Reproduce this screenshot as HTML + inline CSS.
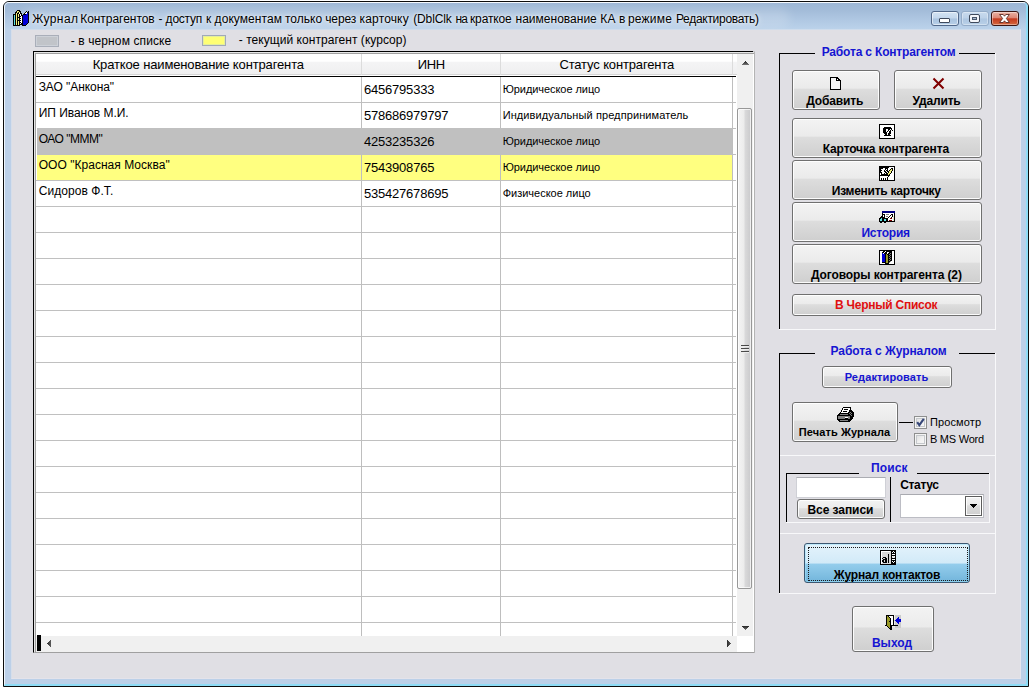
<!DOCTYPE html>
<html lang="ru">
<head>
<meta charset="utf-8">
<title>Журнал Контрагентов</title>
<style>
*{box-sizing:border-box;margin:0;padding:0}
html,body{width:1030px;height:689px;overflow:hidden;background:#fff}
body{font-family:"Liberation Sans",sans-serif;font-size:12px;color:#000;position:relative}
div,svg{position:absolute}
.t{white-space:pre}
/* window frame */
#win{left:3px;top:1px;width:1026px;height:686px;border:1px solid #0c0c0c;border-radius:6px 6px 0 0;overflow:hidden;background:#bcd0e8}
#titlebg{left:0;top:0;right:0;height:28px;background:linear-gradient(180deg,#9cb6d5 0,#a3bcd9 30%,#b0c8e3 65%,#bcd3eb 100%)}
#titleglow{left:16px;top:6px;width:770px;height:20px;border-radius:10px;background:rgba(255,255,255,.16);filter:blur(5px)}
#winhl{left:0;top:0;right:0;bottom:0;border-left:1px solid #eef5fc;border-top:1px solid #f4f8fd;border-right:2px solid #8edcf6;border-bottom:2px solid #8edcf6;border-radius:5px 5px 0 0}
#client{left:11px;top:29px;width:1010px;height:650px;background:#e0dfe4;border-left:1px solid #d6deea;border-top:1px solid #cfdcec;border-right:1px solid #e4e5ee;border-bottom:1px solid #e4e3ea}
/* table */
#tb{left:33px;top:51px;width:722px;height:602px;background:#fff;border-left:1px solid #000;border-top:1px solid #000;border-right:1px solid #b4b4b4;border-bottom:1px solid #b4b4b4}
#tb2{left:34px;top:52px;width:720px;height:600px;border-left:1px solid #e6e6e6;border-top:1px solid #e6e6e6}
#tb3{left:35px;top:53px;width:719px;height:600px;border-left:1px solid #a0a0a0;border-top:1px solid #a0a0a0;border-bottom:1px solid #a0a0a0}
#hdr{left:36px;top:54px;width:701px;height:21px;background:linear-gradient(180deg,#fff 0,#fff 36%,#f4f4f5 42%,#efeff0 100%);border-bottom:1px solid #d5d5d5}
#hline{left:36px;top:76px;width:700px;height:1px;background:#000}
.hl{left:36px;width:700px;height:1px;background:#c0c0c0}
.vl{top:77px;width:1px;height:559px;background:#bebebe}
.hv{top:54px;width:1px;height:21px;background:#dcdcdc}
/* scrollbars */
#vsb{left:737px;top:54px;width:16px;height:582px;background:#f0f0f0}
#hsb{left:36px;top:636px;width:701px;height:16px;background:#f0f0f0}
#vthumb{left:737px;top:108px;width:15px;height:481px;border:1px solid #989898;border-radius:2px;background:linear-gradient(90deg,#f4f4f4 0,#ececec 45%,#d9d9da 55%,#c9c9cb 100%);box-shadow:inset 0 0 0 1px rgba(255,255,255,.7)}
/* buttons */
.btn{border:1px solid #707070;border-radius:3px;background:linear-gradient(180deg,#f3f3f3 0,#ebebeb 45%,#dddddd 48%,#cfcfcf 100%);box-shadow:inset 0 0 0 1px rgba(255,255,255,.9)}
.btnhot{border:1px solid #3c5771;border-radius:3px;background:linear-gradient(180deg,#e4f3fb 0,#d2eaf8 50%,#94cdec 53%,#72b5db 100%);box-shadow:inset 0 0 0 1px rgba(160,225,250,.55)}
.cb{width:13px;height:13px;border:1px solid #8e8f8f;background:linear-gradient(135deg,#d9dadb 0,#f1f1f1 55%,#fbfbfb 100%);box-shadow:inset 0 0 0 1px #f4f4f4,inset 0 0 0 2px #c5c8cc}
/* group lines */
.k{background:#000}
.w{background:#f8f8fa}
</style>
</head>
<body>
<div id="win"><div id="titlebg"></div><div id="titleglow"></div><div id="winhl"></div></div>
<div id="client"></div>

<!-- legend swatches -->
<div style="left:35px;top:35px;width:24px;height:12px;background:#c1c4c9;border:1px solid #a9aeb9;box-shadow:inset 0 0 0 1px #cdd1d8"></div>
<div style="left:202px;top:35px;width:24px;height:11px;background:#ffff74;border:1px solid #a1a9b8;box-shadow:inset 0 0 0 1px #e4ee9c"></div>

<!-- table -->
<div id="tb"></div><div id="tb2"></div><div id="tb3"></div>
<div id="hdr"></div><div id="hline"></div>
<div class="hv" style="left:361px"></div><div class="hv" style="left:500px"></div><div class="hv" style="left:732px"></div><div style="left:753px;top:51px;width:2px;height:1px;background:#c4c4c8"></div>
<div style="left:37px;top:128px;width:695px;height:27px;background:#c0c0c0"></div>
<div style="left:37px;top:155px;width:695px;height:25px;background:#ffff80"></div>
<div class="hl" style="top:102px"></div>
<div class="hl" style="top:128px;left:732px;width:4px"></div>
<div class="hl" style="top:154px;left:732px;width:4px"></div>
<div class="hl" style="top:180px"></div>
<div class="hl" style="top:206px"></div>
<div class="hl" style="top:232px"></div>
<div class="hl" style="top:258px"></div>
<div class="hl" style="top:284px"></div>
<div class="hl" style="top:310px"></div>
<div class="hl" style="top:336px"></div>
<div class="hl" style="top:362px"></div>
<div class="hl" style="top:388px"></div>
<div class="hl" style="top:414px"></div>
<div class="hl" style="top:440px"></div>
<div class="hl" style="top:466px"></div>
<div class="hl" style="top:492px"></div>
<div class="hl" style="top:518px"></div>
<div class="hl" style="top:544px"></div>
<div class="hl" style="top:570px"></div>
<div class="hl" style="top:596px"></div>
<div class="hl" style="top:622px"></div>
<div class="vl" style="left:361px"></div>
<div class="vl" style="left:500px"></div>
<div class="vl" style="left:732px"></div>
<div style="left:361px;top:128px;width:1px;height:27px;background:#c0c0c0"></div>
<div style="left:500px;top:128px;width:1px;height:27px;background:#c0c0c0"></div>
<div id="vsb"></div><div id="hsb"></div><div id="vthumb"></div>
<!-- scrollbar arrows / grip -->
<svg style="left:742px;top:61px" width="7" height="4" viewBox="0 0 7 4" shape-rendering="crispEdges"><rect x="3" y="0" width="1" height="1" fill="#2f2f2f"/><rect x="2" y="1" width="3" height="1" fill="#3f3f3f"/><rect x="1" y="2" width="5" height="1" fill="#565656"/><rect x="0" y="3" width="7" height="1" fill="#6e6e6e"/></svg>
<svg style="left:742px;top:626px" width="7" height="4" viewBox="0 0 7 4" shape-rendering="crispEdges"><rect x="0" y="0" width="7" height="1" fill="#2f2f2f"/><rect x="1" y="1" width="5" height="1" fill="#3f3f3f"/><rect x="2" y="2" width="3" height="1" fill="#565656"/><rect x="3" y="3" width="1" height="1" fill="#6e6e6e"/></svg>
<svg style="left:47px;top:640px" width="4" height="7" viewBox="0 0 4 7" shape-rendering="crispEdges"><rect x="3" y="0" width="1" height="7" fill="#555"/><rect x="2" y="1" width="1" height="5" fill="#4a4a4a"/><rect x="1" y="2" width="1" height="3" fill="#3f3f3f"/><rect x="0" y="3" width="1" height="1" fill="#333"/></svg>
<svg style="left:727px;top:640px" width="4" height="7" viewBox="0 0 4 7" shape-rendering="crispEdges"><rect x="0" y="0" width="1" height="7" fill="#333"/><rect x="1" y="1" width="1" height="5" fill="#3f3f3f"/><rect x="2" y="2" width="1" height="3" fill="#4a4a4a"/><rect x="3" y="3" width="1" height="1" fill="#555"/></svg>
<div style="left:741px;top:345px;width:8px;height:1px;background:#4a4a4a;box-shadow:0 1px 0 #ededed,0 3px 0 #4a4a4a,0 4px 0 #ededed,0 6px 0 #4a4a4a,0 7px 0 #ededed"></div>
<div style="left:37px;top:635px;width:4px;height:16px;background:#000"></div>
<div style="left:737px;top:636px;width:17px;height:16px;background:#fff"></div>
<!-- caption buttons -->
<div style="left:931px;top:11px;width:28px;height:15px;border:1px solid #51688a;border-radius:3px;background:linear-gradient(180deg,#d3e3f3 0,#c3d7ec 48%,#a9c3df 52%,#b7cfe8 100%);box-shadow:inset 0 0 0 1px rgba(255,255,255,.55)"></div>
<div style="left:939px;top:18px;width:11px;height:5px;border:1px solid #3f4a5c;border-radius:1px;background:#fff"></div>
<div style="left:961px;top:11px;width:28px;height:15px;border:1px solid #93abc8;border-radius:3px;background:linear-gradient(180deg,#c8daee 0,#bcd1e8 48%,#adc6e1 52%,#b9d0e8 100%);box-shadow:inset 0 0 0 1px rgba(255,255,255,.35)"></div>
<div style="left:969px;top:14px;width:11px;height:9px;border:1px solid #3f4a5c;border-radius:2px;background:#f4f6fa"></div>
<div style="left:972px;top:17px;width:5px;height:3px;border:1px solid #4c586b;background:#a9bbd2"></div>
<div style="left:991px;top:11px;width:28px;height:15px;border:1px solid #3b1512;border-radius:3px;background:linear-gradient(180deg,#eab3a5 0,#dd8573 46%,#c53a1e 52%,#d4683f 100%);box-shadow:inset 0 0 0 1px rgba(255,255,255,.4)"></div>
<svg style="left:998px;top:13px" width="13" height="11" viewBox="0 0 13 11"><path d="M1.6 1.5 H5.2 L6.5 3.2 L7.8 1.5 H11.4 L8.4 5.5 L11.4 9.5 H7.8 L6.5 7.8 L5.2 9.5 H1.6 L4.6 5.5 Z" fill="#fff" stroke="#5a2a24" stroke-width="0.9" stroke-linejoin="round"/></svg>


<!-- group 1 -->
<div class="k" style="left:779px;top:53px;width:1px;height:276px"></div>
<div class="k" style="left:779px;top:53px;width:36px;height:1px"></div>
<div class="k" style="left:959px;top:53px;width:36px;height:1px"></div>
<div class="w" style="left:995px;top:53px;width:1px;height:277px"></div>
<div class="w" style="left:779px;top:329px;width:217px;height:1px"></div>
<div class="btn" style="left:792px;top:70px;width:88px;height:40px"></div>
<div class="btn" style="left:894px;top:70px;width:88px;height:40px"></div>
<div class="btn" style="left:792px;top:118px;width:190px;height:40px"></div>
<div class="btn" style="left:792px;top:160px;width:190px;height:40px"></div>
<div class="btn" style="left:792px;top:202px;width:190px;height:40px"></div>
<div class="btn" style="left:792px;top:244px;width:190px;height:40px"></div>
<div class="btn" style="left:792px;top:294px;width:190px;height:22px"></div>
<!-- group 2 -->
<div class="k" style="left:779px;top:353px;width:1px;height:240px"></div>
<div class="k" style="left:779px;top:353px;width:36px;height:1px"></div>
<div class="k" style="left:959px;top:353px;width:36px;height:1px"></div>
<div class="w" style="left:995px;top:353px;width:1px;height:241px"></div>
<div class="w" style="left:779px;top:593px;width:217px;height:1px"></div>
<div class="btn" style="left:822px;top:366px;width:130px;height:22px"></div>
<div class="btn" style="left:792px;top:402px;width:106px;height:40px"></div>
<div class="k" style="left:899px;top:422px;width:14px;height:1px"></div>
<!-- checkboxes -->
<div class="cb" style="left:914px;top:416px"></div>
<svg style="left:914px;top:416px" width="13" height="13" viewBox="0 0 13 13"><path d="M3.2 6.2 L5.3 9.2 L9.8 2.8" fill="none" stroke="#374779" stroke-width="2.1"/></svg>
<div class="cb" style="left:914px;top:433px"></div>
<!-- separators -->
<div class="w" style="left:780px;top:455px;width:215px;height:1px"></div>
<div class="w" style="left:780px;top:533px;width:215px;height:1px"></div>
<!-- search group -->
<div class="k" style="left:786px;top:473px;width:1px;height:49px"></div>
<div class="k" style="left:786px;top:473px;width:73px;height:1px"></div>
<div class="k" style="left:917px;top:473px;width:72px;height:1px"></div>
<div class="w" style="left:989px;top:473px;width:1px;height:50px"></div>
<div class="w" style="left:786px;top:522px;width:204px;height:1px"></div>
<div class="k" style="left:890px;top:477px;width:1px;height:45px"></div>
<div style="left:796px;top:477px;width:90px;height:21px;background:#fff;border:1px solid #cfd0d6;border-top-color:#abacb2"></div>
<div class="btn" style="left:797px;top:499px;width:88px;height:20px"></div>
<div style="left:900px;top:494px;width:84px;height:24px;background:#fff;border:1px solid #bcbdc4;border-top-color:#a9aab0"></div>
<div class="btn" style="left:965px;top:496px;width:17px;height:20px;border-radius:0;border-color:#5c5c5c"></div>
<svg style="left:970px;top:504px" width="7" height="4" viewBox="0 0 7 4" shape-rendering="crispEdges"><rect x="0" y="0" width="7" height="1" fill="#000"/><rect x="1" y="1" width="5" height="1" fill="#000"/><rect x="2" y="2" width="3" height="1" fill="#000"/><rect x="3" y="3" width="1" height="1" fill="#000"/></svg>
<!-- contacts journal button -->
<div class="btnhot" style="left:804px;top:543px;width:166px;height:40px"></div>
<div style="left:808px;top:547px;width:160px;height:34px;border:1px dotted #1a1a1a"></div>
<!-- exit -->
<div class="btn" style="left:852px;top:606px;width:82px;height:46px"></div>


<svg style="left:13px;top:10px" width="16" height="16" viewBox="0 0 16 16" shape-rendering="crispEdges"><rect x="4" y="0" width="3" height="1" fill="#000"/><rect x="3" y="1" width="1" height="1" fill="#000"/><rect x="4" y="1" width="2" height="1" fill="#f2f27a"/><rect x="6" y="1" width="2" height="1" fill="#000"/><rect x="13" y="1" width="1" height="1" fill="#000"/><rect x="15" y="1" width="1" height="1" fill="#000"/><rect x="2" y="2" width="2" height="1" fill="#000"/><rect x="4" y="2" width="1" height="1" fill="#f2f27a"/><rect x="5" y="2" width="1" height="1" fill="#000"/><rect x="6" y="2" width="1" height="1" fill="#f2f27a"/><rect x="7" y="2" width="1" height="1" fill="#000"/><rect x="12" y="2" width="1" height="1" fill="#000"/><rect x="13" y="2" width="1" height="1" fill="#fff"/><rect x="14" y="2" width="2" height="1" fill="#000"/><rect x="2" y="3" width="1" height="1" fill="#000"/><rect x="3" y="3" width="1" height="1" fill="#f2f27a"/><rect x="4" y="3" width="2" height="1" fill="#000"/><rect x="6" y="3" width="1" height="1" fill="#fff"/><rect x="7" y="3" width="2" height="1" fill="#000"/><rect x="11" y="3" width="1" height="1" fill="#000"/><rect x="12" y="3" width="2" height="1" fill="#fff"/><rect x="14" y="3" width="1" height="1" fill="#0000d8"/><rect x="15" y="3" width="1" height="1" fill="#000"/><rect x="0" y="4" width="3" height="1" fill="#000"/><rect x="3" y="4" width="1" height="1" fill="#f2f27a"/><rect x="4" y="4" width="1" height="1" fill="#000"/><rect x="5" y="4" width="1" height="1" fill="#f2f27a"/><rect x="6" y="4" width="1" height="1" fill="#000"/><rect x="7" y="4" width="1" height="1" fill="#fff"/><rect x="8" y="4" width="1" height="1" fill="#000"/><rect x="10" y="4" width="3" height="1" fill="#000"/><rect x="13" y="4" width="2" height="1" fill="#0000d8"/><rect x="15" y="4" width="1" height="1" fill="#000"/><rect x="0" y="5" width="1" height="1" fill="#000"/><rect x="1" y="5" width="1" height="1" fill="#5fe3e3"/><rect x="2" y="5" width="1" height="1" fill="#000"/><rect x="3" y="5" width="1" height="1" fill="#f2f27a"/><rect x="4" y="5" width="1" height="1" fill="#000"/><rect x="5" y="5" width="1" height="1" fill="#f2f27a"/><rect x="6" y="5" width="1" height="1" fill="#000"/><rect x="7" y="5" width="1" height="1" fill="#fff"/><rect x="8" y="5" width="2" height="1" fill="#000"/><rect x="10" y="5" width="5" height="1" fill="#0000d8"/><rect x="15" y="5" width="1" height="1" fill="#000"/><rect x="0" y="6" width="1" height="1" fill="#000"/><rect x="1" y="6" width="1" height="1" fill="#5fe3e3"/><rect x="2" y="6" width="1" height="1" fill="#000"/><rect x="3" y="6" width="1" height="1" fill="#f2f27a"/><rect x="4" y="6" width="1" height="1" fill="#000"/><rect x="5" y="6" width="1" height="1" fill="#f2f27a"/><rect x="6" y="6" width="2" height="1" fill="#000"/><rect x="8" y="6" width="1" height="1" fill="#fff"/><rect x="9" y="6" width="1" height="1" fill="#000"/><rect x="10" y="6" width="5" height="1" fill="#0000d8"/><rect x="15" y="6" width="1" height="1" fill="#000"/><rect x="0" y="7" width="1" height="1" fill="#000"/><rect x="1" y="7" width="1" height="1" fill="#5fe3e3"/><rect x="2" y="7" width="1" height="1" fill="#000"/><rect x="3" y="7" width="1" height="1" fill="#f2f27a"/><rect x="4" y="7" width="3" height="1" fill="#000"/><rect x="7" y="7" width="2" height="1" fill="#fff"/><rect x="9" y="7" width="1" height="1" fill="#000"/><rect x="10" y="7" width="5" height="1" fill="#0000d8"/><rect x="15" y="7" width="1" height="1" fill="#000"/><rect x="0" y="8" width="1" height="1" fill="#000"/><rect x="1" y="8" width="1" height="1" fill="#5fe3e3"/><rect x="2" y="8" width="1" height="1" fill="#000"/><rect x="3" y="8" width="1" height="1" fill="#f2f27a"/><rect x="4" y="8" width="1" height="1" fill="#000"/><rect x="5" y="8" width="1" height="1" fill="#f2f27a"/><rect x="6" y="8" width="2" height="1" fill="#000"/><rect x="8" y="8" width="1" height="1" fill="#fff"/><rect x="9" y="8" width="1" height="1" fill="#000"/><rect x="10" y="8" width="5" height="1" fill="#0000d8"/><rect x="15" y="8" width="1" height="1" fill="#000"/><rect x="0" y="9" width="1" height="1" fill="#000"/><rect x="1" y="9" width="1" height="1" fill="#5fe3e3"/><rect x="2" y="9" width="1" height="1" fill="#000"/><rect x="3" y="9" width="1" height="1" fill="#f2f27a"/><rect x="4" y="9" width="1" height="1" fill="#000"/><rect x="5" y="9" width="1" height="1" fill="#f2f27a"/><rect x="6" y="9" width="1" height="1" fill="#000"/><rect x="7" y="9" width="2" height="1" fill="#fff"/><rect x="9" y="9" width="1" height="1" fill="#000"/><rect x="10" y="9" width="5" height="1" fill="#0000d8"/><rect x="15" y="9" width="1" height="1" fill="#000"/><rect x="0" y="10" width="1" height="1" fill="#000"/><rect x="1" y="10" width="1" height="1" fill="#5fe3e3"/><rect x="2" y="10" width="1" height="1" fill="#000"/><rect x="3" y="10" width="1" height="1" fill="#f2f27a"/><rect x="4" y="10" width="4" height="1" fill="#000"/><rect x="8" y="10" width="1" height="1" fill="#fff"/><rect x="9" y="10" width="1" height="1" fill="#000"/><rect x="10" y="10" width="5" height="1" fill="#0000d8"/><rect x="15" y="10" width="1" height="1" fill="#000"/><rect x="0" y="11" width="1" height="1" fill="#000"/><rect x="1" y="11" width="1" height="1" fill="#5fe3e3"/><rect x="2" y="11" width="1" height="1" fill="#000"/><rect x="3" y="11" width="1" height="1" fill="#f2f27a"/><rect x="4" y="11" width="1" height="1" fill="#000"/><rect x="5" y="11" width="1" height="1" fill="#f2f27a"/><rect x="6" y="11" width="1" height="1" fill="#000"/><rect x="7" y="11" width="2" height="1" fill="#fff"/><rect x="9" y="11" width="1" height="1" fill="#000"/><rect x="10" y="11" width="5" height="1" fill="#0000d8"/><rect x="15" y="11" width="1" height="1" fill="#000"/><rect x="0" y="12" width="1" height="1" fill="#000"/><rect x="1" y="12" width="1" height="1" fill="#5fe3e3"/><rect x="2" y="12" width="1" height="1" fill="#000"/><rect x="3" y="12" width="1" height="1" fill="#f2f27a"/><rect x="4" y="12" width="1" height="1" fill="#000"/><rect x="5" y="12" width="1" height="1" fill="#f2f27a"/><rect x="6" y="12" width="2" height="1" fill="#000"/><rect x="8" y="12" width="1" height="1" fill="#fff"/><rect x="9" y="12" width="1" height="1" fill="#000"/><rect x="10" y="12" width="5" height="1" fill="#0000d8"/><rect x="15" y="12" width="1" height="1" fill="#000"/><rect x="0" y="13" width="1" height="1" fill="#000"/><rect x="1" y="13" width="1" height="1" fill="#5fe3e3"/><rect x="2" y="13" width="1" height="1" fill="#000"/><rect x="3" y="13" width="1" height="1" fill="#f2f27a"/><rect x="4" y="13" width="1" height="1" fill="#000"/><rect x="5" y="13" width="1" height="1" fill="#f2f27a"/><rect x="6" y="13" width="1" height="1" fill="#000"/><rect x="7" y="13" width="1" height="1" fill="#fff"/><rect x="8" y="13" width="2" height="1" fill="#000"/><rect x="10" y="13" width="4" height="1" fill="#0000d8"/><rect x="14" y="13" width="1" height="1" fill="#000"/><rect x="0" y="14" width="1" height="1" fill="#000"/><rect x="1" y="14" width="1" height="1" fill="#5fe3e3"/><rect x="2" y="14" width="1" height="1" fill="#000"/><rect x="3" y="14" width="1" height="1" fill="#f2f27a"/><rect x="4" y="14" width="1" height="1" fill="#000"/><rect x="5" y="14" width="1" height="1" fill="#f2f27a"/><rect x="6" y="14" width="4" height="1" fill="#000"/><rect x="10" y="14" width="3" height="1" fill="#0000d8"/><rect x="13" y="14" width="1" height="1" fill="#000"/><rect x="0" y="15" width="7" height="1" fill="#000"/><rect x="9" y="15" width="4" height="1" fill="#000"/></svg>
<svg style="left:830px;top:77px" width="11" height="13" viewBox="0 0 11 13" shape-rendering="crispEdges"><rect x="0" y="0" width="8" height="1" fill="#000"/><rect x="0" y="1" width="1" height="1" fill="#000"/><rect x="1" y="1" width="5" height="1" fill="#f6f6f6"/><rect x="6" y="1" width="3" height="1" fill="#000"/><rect x="0" y="2" width="1" height="1" fill="#000"/><rect x="1" y="2" width="5" height="1" fill="#f6f6f6"/><rect x="6" y="2" width="1" height="1" fill="#000"/><rect x="7" y="2" width="1" height="1" fill="#fff"/><rect x="8" y="2" width="2" height="1" fill="#000"/><rect x="0" y="3" width="1" height="1" fill="#000"/><rect x="1" y="3" width="5" height="1" fill="#f6f6f6"/><rect x="6" y="3" width="5" height="1" fill="#000"/><rect x="0" y="4" width="1" height="1" fill="#000"/><rect x="1" y="4" width="9" height="1" fill="#f6f6f6"/><rect x="10" y="4" width="1" height="1" fill="#000"/><rect x="0" y="5" width="1" height="1" fill="#000"/><rect x="1" y="5" width="9" height="1" fill="#f6f6f6"/><rect x="10" y="5" width="1" height="1" fill="#000"/><rect x="0" y="6" width="1" height="1" fill="#000"/><rect x="1" y="6" width="9" height="1" fill="#f6f6f6"/><rect x="10" y="6" width="1" height="1" fill="#000"/><rect x="0" y="7" width="1" height="1" fill="#000"/><rect x="1" y="7" width="9" height="1" fill="#f6f6f6"/><rect x="10" y="7" width="1" height="1" fill="#000"/><rect x="0" y="8" width="1" height="1" fill="#000"/><rect x="1" y="8" width="9" height="1" fill="#f6f6f6"/><rect x="10" y="8" width="1" height="1" fill="#000"/><rect x="0" y="9" width="1" height="1" fill="#000"/><rect x="1" y="9" width="9" height="1" fill="#f6f6f6"/><rect x="10" y="9" width="1" height="1" fill="#000"/><rect x="0" y="10" width="1" height="1" fill="#000"/><rect x="1" y="10" width="9" height="1" fill="#f6f6f6"/><rect x="10" y="10" width="1" height="1" fill="#000"/><rect x="0" y="11" width="1" height="1" fill="#000"/><rect x="1" y="11" width="9" height="1" fill="#f6f6f6"/><rect x="10" y="11" width="1" height="1" fill="#000"/><rect x="0" y="12" width="11" height="1" fill="#000"/></svg>
<svg style="left:879px;top:124px" width="16" height="15" viewBox="0 0 16 15" shape-rendering="crispEdges"><rect x="0" y="0" width="16" height="1" fill="#000"/><rect x="0" y="1" width="1" height="1" fill="#000"/><rect x="1" y="1" width="14" height="1" fill="#fff"/><rect x="15" y="1" width="1" height="1" fill="#000"/><rect x="0" y="2" width="1" height="1" fill="#000"/><rect x="1" y="2" width="14" height="1" fill="#fff"/><rect x="15" y="2" width="1" height="1" fill="#000"/><rect x="0" y="3" width="1" height="1" fill="#000"/><rect x="1" y="3" width="4" height="1" fill="#fff"/><rect x="5" y="3" width="7" height="1" fill="#000"/><rect x="12" y="3" width="3" height="1" fill="#fff"/><rect x="15" y="3" width="1" height="1" fill="#000"/><rect x="0" y="4" width="1" height="1" fill="#000"/><rect x="1" y="4" width="3" height="1" fill="#fff"/><rect x="4" y="4" width="9" height="1" fill="#000"/><rect x="13" y="4" width="2" height="1" fill="#fff"/><rect x="15" y="4" width="1" height="1" fill="#000"/><rect x="0" y="5" width="1" height="1" fill="#000"/><rect x="1" y="5" width="3" height="1" fill="#fff"/><rect x="4" y="5" width="3" height="1" fill="#000"/><rect x="7" y="5" width="2" height="1" fill="#fff"/><rect x="9" y="5" width="2" height="1" fill="#000"/><rect x="11" y="5" width="1" height="1" fill="#fff"/><rect x="12" y="5" width="1" height="1" fill="#000"/><rect x="13" y="5" width="2" height="1" fill="#fff"/><rect x="15" y="5" width="1" height="1" fill="#000"/><rect x="0" y="6" width="1" height="1" fill="#000"/><rect x="1" y="6" width="3" height="1" fill="#fff"/><rect x="4" y="6" width="3" height="1" fill="#000"/><rect x="7" y="6" width="2" height="1" fill="#fff"/><rect x="9" y="6" width="1" height="1" fill="#000"/><rect x="10" y="6" width="1" height="1" fill="#fff"/><rect x="11" y="6" width="1" height="1" fill="#000"/><rect x="12" y="6" width="1" height="1" fill="#fff"/><rect x="13" y="6" width="1" height="1" fill="#000"/><rect x="14" y="6" width="1" height="1" fill="#fff"/><rect x="15" y="6" width="1" height="1" fill="#000"/><rect x="0" y="7" width="1" height="1" fill="#000"/><rect x="1" y="7" width="3" height="1" fill="#fff"/><rect x="4" y="7" width="3" height="1" fill="#000"/><rect x="7" y="7" width="1" height="1" fill="#fff"/><rect x="8" y="7" width="1" height="1" fill="#000"/><rect x="9" y="7" width="1" height="1" fill="#fff"/><rect x="10" y="7" width="2" height="1" fill="#000"/><rect x="12" y="7" width="3" height="1" fill="#fff"/><rect x="15" y="7" width="1" height="1" fill="#000"/><rect x="0" y="8" width="1" height="1" fill="#000"/><rect x="1" y="8" width="3" height="1" fill="#fff"/><rect x="4" y="8" width="4" height="1" fill="#000"/><rect x="8" y="8" width="2" height="1" fill="#fff"/><rect x="10" y="8" width="2" height="1" fill="#000"/><rect x="12" y="8" width="3" height="1" fill="#fff"/><rect x="15" y="8" width="1" height="1" fill="#000"/><rect x="0" y="9" width="1" height="1" fill="#000"/><rect x="1" y="9" width="4" height="1" fill="#fff"/><rect x="5" y="9" width="3" height="1" fill="#000"/><rect x="8" y="9" width="1" height="1" fill="#fff"/><rect x="9" y="9" width="3" height="1" fill="#000"/><rect x="12" y="9" width="3" height="1" fill="#fff"/><rect x="15" y="9" width="1" height="1" fill="#000"/><rect x="0" y="10" width="1" height="1" fill="#000"/><rect x="1" y="10" width="5" height="1" fill="#fff"/><rect x="6" y="10" width="2" height="1" fill="#000"/><rect x="8" y="10" width="1" height="1" fill="#fff"/><rect x="9" y="10" width="2" height="1" fill="#000"/><rect x="11" y="10" width="4" height="1" fill="#fff"/><rect x="15" y="10" width="1" height="1" fill="#000"/><rect x="0" y="11" width="1" height="1" fill="#000"/><rect x="1" y="11" width="4" height="1" fill="#fff"/><rect x="5" y="11" width="7" height="1" fill="#000"/><rect x="12" y="11" width="3" height="1" fill="#fff"/><rect x="15" y="11" width="1" height="1" fill="#000"/><rect x="0" y="12" width="1" height="1" fill="#000"/><rect x="1" y="12" width="14" height="1" fill="#fff"/><rect x="15" y="12" width="1" height="1" fill="#000"/><rect x="0" y="13" width="1" height="1" fill="#000"/><rect x="1" y="13" width="14" height="1" fill="#fff"/><rect x="15" y="13" width="1" height="1" fill="#000"/><rect x="0" y="14" width="16" height="1" fill="#000"/></svg>
<svg style="left:879px;top:166px" width="16" height="15" viewBox="0 0 16 15" shape-rendering="crispEdges"><rect x="0" y="0" width="16" height="1" fill="#000"/><rect x="0" y="1" width="10" height="1" fill="#000"/><rect x="10" y="1" width="5" height="1" fill="#fff"/><rect x="15" y="1" width="1" height="1" fill="#000"/><rect x="0" y="2" width="4" height="1" fill="#000"/><rect x="4" y="2" width="2" height="1" fill="#fff"/><rect x="6" y="2" width="3" height="1" fill="#000"/><rect x="9" y="2" width="3" height="1" fill="#fff"/><rect x="12" y="2" width="2" height="1" fill="#000"/><rect x="14" y="2" width="1" height="1" fill="#fff"/><rect x="15" y="2" width="1" height="1" fill="#000"/><rect x="0" y="3" width="2" height="1" fill="#000"/><rect x="2" y="3" width="4" height="1" fill="#fff"/><rect x="6" y="3" width="1" height="1" fill="#000"/><rect x="7" y="3" width="1" height="1" fill="#fff"/><rect x="8" y="3" width="1" height="1" fill="#000"/><rect x="9" y="3" width="2" height="1" fill="#fff"/><rect x="11" y="3" width="1" height="1" fill="#000"/><rect x="12" y="3" width="1" height="1" fill="#f2f27a"/><rect x="13" y="3" width="1" height="1" fill="#000"/><rect x="14" y="3" width="1" height="1" fill="#fff"/><rect x="15" y="3" width="1" height="1" fill="#000"/><rect x="0" y="4" width="3" height="1" fill="#000"/><rect x="3" y="4" width="2" height="1" fill="#fff"/><rect x="5" y="4" width="1" height="1" fill="#000"/><rect x="6" y="4" width="1" height="1" fill="#fff"/><rect x="7" y="4" width="2" height="1" fill="#000"/><rect x="9" y="4" width="1" height="1" fill="#fff"/><rect x="10" y="4" width="1" height="1" fill="#000"/><rect x="11" y="4" width="2" height="1" fill="#f2f27a"/><rect x="13" y="4" width="1" height="1" fill="#000"/><rect x="14" y="4" width="1" height="1" fill="#fff"/><rect x="15" y="4" width="1" height="1" fill="#000"/><rect x="0" y="5" width="2" height="1" fill="#000"/><rect x="2" y="5" width="3" height="1" fill="#fff"/><rect x="5" y="5" width="2" height="1" fill="#000"/><rect x="7" y="5" width="1" height="1" fill="#fff"/><rect x="8" y="5" width="2" height="1" fill="#000"/><rect x="10" y="5" width="2" height="1" fill="#f2f27a"/><rect x="12" y="5" width="1" height="1" fill="#000"/><rect x="13" y="5" width="2" height="1" fill="#fff"/><rect x="15" y="5" width="1" height="1" fill="#000"/><rect x="0" y="6" width="3" height="1" fill="#000"/><rect x="3" y="6" width="3" height="1" fill="#fff"/><rect x="6" y="6" width="2" height="1" fill="#000"/><rect x="8" y="6" width="1" height="1" fill="#fff"/><rect x="9" y="6" width="1" height="1" fill="#000"/><rect x="10" y="6" width="2" height="1" fill="#f2f27a"/><rect x="12" y="6" width="1" height="1" fill="#000"/><rect x="13" y="6" width="2" height="1" fill="#fff"/><rect x="15" y="6" width="1" height="1" fill="#000"/><rect x="0" y="7" width="1" height="1" fill="#000"/><rect x="1" y="7" width="1" height="1" fill="#fff"/><rect x="2" y="7" width="1" height="1" fill="#000"/><rect x="3" y="7" width="2" height="1" fill="#fff"/><rect x="5" y="7" width="1" height="1" fill="#000"/><rect x="6" y="7" width="1" height="1" fill="#fff"/><rect x="7" y="7" width="2" height="1" fill="#000"/><rect x="9" y="7" width="2" height="1" fill="#f2f27a"/><rect x="11" y="7" width="1" height="1" fill="#000"/><rect x="12" y="7" width="3" height="1" fill="#fff"/><rect x="15" y="7" width="1" height="1" fill="#000"/><rect x="0" y="8" width="1" height="1" fill="#000"/><rect x="1" y="8" width="1" height="1" fill="#fff"/><rect x="2" y="8" width="7" height="1" fill="#000"/><rect x="9" y="8" width="1" height="1" fill="#f2f27a"/><rect x="10" y="8" width="1" height="1" fill="#000"/><rect x="11" y="8" width="4" height="1" fill="#fff"/><rect x="15" y="8" width="1" height="1" fill="#000"/><rect x="0" y="9" width="11" height="1" fill="#000"/><rect x="11" y="9" width="4" height="1" fill="#fff"/><rect x="15" y="9" width="1" height="1" fill="#000"/><rect x="0" y="10" width="1" height="1" fill="#000"/><rect x="1" y="10" width="8" height="1" fill="#fff"/><rect x="9" y="10" width="1" height="1" fill="#000"/><rect x="10" y="10" width="5" height="1" fill="#fff"/><rect x="15" y="10" width="1" height="1" fill="#000"/><rect x="0" y="11" width="1" height="1" fill="#000"/><rect x="1" y="11" width="7" height="1" fill="#fff"/><rect x="8" y="11" width="1" height="1" fill="#000"/><rect x="9" y="11" width="6" height="1" fill="#fff"/><rect x="15" y="11" width="1" height="1" fill="#000"/><rect x="0" y="12" width="1" height="1" fill="#000"/><rect x="1" y="12" width="1" height="1" fill="#fff"/><rect x="2" y="12" width="1" height="1" fill="#000"/><rect x="3" y="12" width="1" height="1" fill="#fff"/><rect x="4" y="12" width="1" height="1" fill="#000"/><rect x="5" y="12" width="1" height="1" fill="#fff"/><rect x="6" y="12" width="1" height="1" fill="#000"/><rect x="7" y="12" width="1" height="1" fill="#fff"/><rect x="8" y="12" width="1" height="1" fill="#000"/><rect x="9" y="12" width="6" height="1" fill="#fff"/><rect x="15" y="12" width="1" height="1" fill="#000"/><rect x="0" y="13" width="1" height="1" fill="#000"/><rect x="1" y="13" width="1" height="1" fill="#fff"/><rect x="2" y="13" width="1" height="1" fill="#000"/><rect x="3" y="13" width="1" height="1" fill="#fff"/><rect x="4" y="13" width="1" height="1" fill="#000"/><rect x="5" y="13" width="1" height="1" fill="#fff"/><rect x="6" y="13" width="1" height="1" fill="#000"/><rect x="7" y="13" width="1" height="1" fill="#fff"/><rect x="8" y="13" width="1" height="1" fill="#000"/><rect x="9" y="13" width="6" height="1" fill="#fff"/><rect x="15" y="13" width="1" height="1" fill="#000"/><rect x="0" y="14" width="16" height="1" fill="#000"/></svg>
<svg style="left:879px;top:211px" width="16" height="12" viewBox="0 0 16 12" shape-rendering="crispEdges"><rect x="3" y="0" width="13" height="1" fill="#000080"/><rect x="3" y="1" width="13" height="1" fill="#000080"/><rect x="3" y="2" width="1" height="1" fill="#000"/><rect x="4" y="2" width="11" height="1" fill="#fff"/><rect x="15" y="2" width="1" height="1" fill="#000"/><rect x="3" y="3" width="3" height="1" fill="#000"/><rect x="6" y="3" width="1" height="1" fill="#fff"/><rect x="7" y="3" width="3" height="1" fill="#808080"/><rect x="10" y="3" width="2" height="1" fill="#fff"/><rect x="12" y="3" width="2" height="1" fill="#000"/><rect x="14" y="3" width="1" height="1" fill="#fff"/><rect x="15" y="3" width="1" height="1" fill="#000"/><rect x="3" y="4" width="1" height="1" fill="#000"/><rect x="4" y="4" width="1" height="1" fill="#fff"/><rect x="5" y="4" width="1" height="1" fill="#000"/><rect x="6" y="4" width="5" height="1" fill="#fff"/><rect x="11" y="4" width="1" height="1" fill="#000"/><rect x="12" y="4" width="1" height="1" fill="#fff"/><rect x="13" y="4" width="1" height="1" fill="#000"/><rect x="14" y="4" width="1" height="1" fill="#fff"/><rect x="15" y="4" width="1" height="1" fill="#000"/><rect x="2" y="5" width="2" height="1" fill="#000"/><rect x="4" y="5" width="1" height="1" fill="#fff"/><rect x="5" y="5" width="1" height="1" fill="#000"/><rect x="6" y="5" width="1" height="1" fill="#fff"/><rect x="7" y="5" width="2" height="1" fill="#808080"/><rect x="9" y="5" width="1" height="1" fill="#fff"/><rect x="10" y="5" width="1" height="1" fill="#000"/><rect x="11" y="5" width="2" height="1" fill="#fff"/><rect x="13" y="5" width="1" height="1" fill="#000"/><rect x="14" y="5" width="1" height="1" fill="#e8e8c8"/><rect x="15" y="5" width="1" height="1" fill="#000"/><rect x="1" y="6" width="5" height="1" fill="#000"/><rect x="6" y="6" width="3" height="1" fill="#fff"/><rect x="9" y="6" width="1" height="1" fill="#000"/><rect x="10" y="6" width="2" height="1" fill="#fff"/><rect x="12" y="6" width="1" height="1" fill="#000"/><rect x="13" y="6" width="1" height="1" fill="#fff"/><rect x="14" y="6" width="1" height="1" fill="#e8e8c8"/><rect x="15" y="6" width="1" height="1" fill="#000"/><rect x="0" y="7" width="2" height="1" fill="#000"/><rect x="2" y="7" width="1" height="1" fill="#5fe3e3"/><rect x="3" y="7" width="6" height="1" fill="#000"/><rect x="9" y="7" width="2" height="1" fill="#fff"/><rect x="11" y="7" width="2" height="1" fill="#800000"/><rect x="13" y="7" width="1" height="1" fill="#fff"/><rect x="14" y="7" width="1" height="1" fill="#e8e8c8"/><rect x="15" y="7" width="1" height="1" fill="#000"/><rect x="0" y="8" width="1" height="1" fill="#000"/><rect x="1" y="8" width="2" height="1" fill="#5fe3e3"/><rect x="3" y="8" width="2" height="1" fill="#000"/><rect x="5" y="8" width="2" height="1" fill="#5fe3e3"/><rect x="7" y="8" width="2" height="1" fill="#000"/><rect x="9" y="8" width="5" height="1" fill="#fff"/><rect x="14" y="8" width="1" height="1" fill="#e8e8c8"/><rect x="15" y="8" width="1" height="1" fill="#000"/><rect x="0" y="9" width="1" height="1" fill="#000"/><rect x="1" y="9" width="2" height="1" fill="#5fe3e3"/><rect x="3" y="9" width="2" height="1" fill="#000"/><rect x="5" y="9" width="2" height="1" fill="#5fe3e3"/><rect x="7" y="9" width="2" height="1" fill="#000"/><rect x="9" y="9" width="1" height="1" fill="#fff"/><rect x="10" y="9" width="3" height="1" fill="#800000"/><rect x="13" y="9" width="1" height="1" fill="#fff"/><rect x="14" y="9" width="1" height="1" fill="#e8e8c8"/><rect x="15" y="9" width="1" height="1" fill="#000"/><rect x="0" y="10" width="16" height="1" fill="#000"/><rect x="1" y="11" width="2" height="1" fill="#000"/><rect x="5" y="11" width="2" height="1" fill="#000"/></svg>
<svg style="left:879px;top:250px" width="16" height="15" viewBox="0 0 16 15" shape-rendering="crispEdges"><rect x="0" y="0" width="16" height="1" fill="#000"/><rect x="0" y="1" width="1" height="1" fill="#000"/><rect x="1" y="1" width="3" height="1" fill="#fff"/><rect x="4" y="1" width="2" height="1" fill="#000"/><rect x="6" y="1" width="1" height="1" fill="#fff"/><rect x="7" y="1" width="6" height="1" fill="#000"/><rect x="13" y="1" width="2" height="1" fill="#fff"/><rect x="15" y="1" width="1" height="1" fill="#000"/><rect x="0" y="2" width="1" height="1" fill="#000"/><rect x="1" y="2" width="2" height="1" fill="#fff"/><rect x="3" y="2" width="2" height="1" fill="#000"/><rect x="5" y="2" width="1" height="1" fill="#fff"/><rect x="6" y="2" width="2" height="1" fill="#000"/><rect x="8" y="2" width="2" height="1" fill="#fff"/><rect x="10" y="2" width="3" height="1" fill="#000"/><rect x="13" y="2" width="2" height="1" fill="#fff"/><rect x="15" y="2" width="1" height="1" fill="#000"/><rect x="0" y="3" width="1" height="1" fill="#000"/><rect x="1" y="3" width="2" height="1" fill="#fff"/><rect x="3" y="3" width="1" height="1" fill="#0000d8"/><rect x="4" y="3" width="1" height="1" fill="#fff"/><rect x="5" y="3" width="3" height="1" fill="#000"/><rect x="8" y="3" width="1" height="1" fill="#fff"/><rect x="9" y="3" width="2" height="1" fill="#000"/><rect x="11" y="3" width="1" height="1" fill="#808080"/><rect x="12" y="3" width="1" height="1" fill="#000"/><rect x="13" y="3" width="2" height="1" fill="#fff"/><rect x="15" y="3" width="1" height="1" fill="#000"/><rect x="0" y="4" width="1" height="1" fill="#000"/><rect x="1" y="4" width="2" height="1" fill="#fff"/><rect x="3" y="4" width="3" height="1" fill="#0000d8"/><rect x="6" y="4" width="1" height="1" fill="#000"/><rect x="7" y="4" width="1" height="1" fill="#9a9a28"/><rect x="8" y="4" width="2" height="1" fill="#000"/><rect x="10" y="4" width="1" height="1" fill="#808080"/><rect x="11" y="4" width="2" height="1" fill="#000"/><rect x="13" y="4" width="2" height="1" fill="#fff"/><rect x="15" y="4" width="1" height="1" fill="#000"/><rect x="0" y="5" width="1" height="1" fill="#000"/><rect x="1" y="5" width="2" height="1" fill="#fff"/><rect x="3" y="5" width="3" height="1" fill="#0000d8"/><rect x="6" y="5" width="1" height="1" fill="#000"/><rect x="7" y="5" width="2" height="1" fill="#9a9a28"/><rect x="9" y="5" width="2" height="1" fill="#000"/><rect x="11" y="5" width="1" height="1" fill="#808080"/><rect x="12" y="5" width="1" height="1" fill="#000"/><rect x="13" y="5" width="2" height="1" fill="#fff"/><rect x="15" y="5" width="1" height="1" fill="#000"/><rect x="0" y="6" width="1" height="1" fill="#000"/><rect x="1" y="6" width="2" height="1" fill="#fff"/><rect x="3" y="6" width="3" height="1" fill="#0000d8"/><rect x="6" y="6" width="1" height="1" fill="#000"/><rect x="7" y="6" width="2" height="1" fill="#9a9a28"/><rect x="9" y="6" width="1" height="1" fill="#000"/><rect x="10" y="6" width="1" height="1" fill="#808080"/><rect x="11" y="6" width="2" height="1" fill="#000"/><rect x="13" y="6" width="2" height="1" fill="#fff"/><rect x="15" y="6" width="1" height="1" fill="#000"/><rect x="0" y="7" width="1" height="1" fill="#000"/><rect x="1" y="7" width="2" height="1" fill="#fff"/><rect x="3" y="7" width="3" height="1" fill="#0000d8"/><rect x="6" y="7" width="1" height="1" fill="#000"/><rect x="7" y="7" width="2" height="1" fill="#9a9a28"/><rect x="9" y="7" width="2" height="1" fill="#000"/><rect x="11" y="7" width="1" height="1" fill="#808080"/><rect x="12" y="7" width="1" height="1" fill="#000"/><rect x="13" y="7" width="2" height="1" fill="#fff"/><rect x="15" y="7" width="1" height="1" fill="#000"/><rect x="0" y="8" width="1" height="1" fill="#000"/><rect x="1" y="8" width="2" height="1" fill="#fff"/><rect x="3" y="8" width="3" height="1" fill="#0000d8"/><rect x="6" y="8" width="1" height="1" fill="#000"/><rect x="7" y="8" width="2" height="1" fill="#9a9a28"/><rect x="9" y="8" width="1" height="1" fill="#000"/><rect x="10" y="8" width="1" height="1" fill="#808080"/><rect x="11" y="8" width="2" height="1" fill="#000"/><rect x="13" y="8" width="2" height="1" fill="#fff"/><rect x="15" y="8" width="1" height="1" fill="#000"/><rect x="0" y="9" width="1" height="1" fill="#000"/><rect x="1" y="9" width="2" height="1" fill="#fff"/><rect x="3" y="9" width="3" height="1" fill="#0000d8"/><rect x="6" y="9" width="1" height="1" fill="#000"/><rect x="7" y="9" width="2" height="1" fill="#9a9a28"/><rect x="9" y="9" width="2" height="1" fill="#000"/><rect x="11" y="9" width="1" height="1" fill="#808080"/><rect x="12" y="9" width="1" height="1" fill="#000"/><rect x="13" y="9" width="2" height="1" fill="#fff"/><rect x="15" y="9" width="1" height="1" fill="#000"/><rect x="0" y="10" width="1" height="1" fill="#000"/><rect x="1" y="10" width="2" height="1" fill="#fff"/><rect x="3" y="10" width="3" height="1" fill="#0000d8"/><rect x="6" y="10" width="1" height="1" fill="#000"/><rect x="7" y="10" width="2" height="1" fill="#9a9a28"/><rect x="9" y="10" width="1" height="1" fill="#000"/><rect x="10" y="10" width="1" height="1" fill="#808080"/><rect x="11" y="10" width="2" height="1" fill="#000"/><rect x="13" y="10" width="2" height="1" fill="#fff"/><rect x="15" y="10" width="1" height="1" fill="#000"/><rect x="0" y="11" width="1" height="1" fill="#000"/><rect x="1" y="11" width="2" height="1" fill="#fff"/><rect x="3" y="11" width="3" height="1" fill="#0000d8"/><rect x="6" y="11" width="1" height="1" fill="#000"/><rect x="7" y="11" width="2" height="1" fill="#9a9a28"/><rect x="9" y="11" width="2" height="1" fill="#000"/><rect x="11" y="11" width="1" height="1" fill="#808080"/><rect x="12" y="11" width="3" height="1" fill="#fff"/><rect x="15" y="11" width="1" height="1" fill="#000"/><rect x="0" y="12" width="1" height="1" fill="#000"/><rect x="1" y="12" width="2" height="1" fill="#fff"/><rect x="3" y="12" width="4" height="1" fill="#000"/><rect x="7" y="12" width="2" height="1" fill="#9a9a28"/><rect x="9" y="12" width="1" height="1" fill="#000"/><rect x="10" y="12" width="1" height="1" fill="#808080"/><rect x="11" y="12" width="4" height="1" fill="#fff"/><rect x="15" y="12" width="1" height="1" fill="#000"/><rect x="0" y="13" width="1" height="1" fill="#000"/><rect x="1" y="13" width="5" height="1" fill="#fff"/><rect x="6" y="13" width="4" height="1" fill="#000"/><rect x="10" y="13" width="5" height="1" fill="#fff"/><rect x="15" y="13" width="1" height="1" fill="#000"/><rect x="0" y="14" width="16" height="1" fill="#000"/></svg>
<svg style="left:837px;top:407px" width="17" height="15" viewBox="0 0 17 15" shape-rendering="crispEdges"><rect x="6" y="0" width="8" height="1" fill="#000"/><rect x="5" y="1" width="1" height="1" fill="#000"/><rect x="6" y="1" width="7" height="1" fill="#fff"/><rect x="13" y="1" width="1" height="1" fill="#000"/><rect x="5" y="2" width="1" height="1" fill="#000"/><rect x="6" y="2" width="1" height="1" fill="#fff"/><rect x="7" y="2" width="4" height="1" fill="#000"/><rect x="11" y="2" width="2" height="1" fill="#fff"/><rect x="13" y="2" width="1" height="1" fill="#000"/><rect x="4" y="3" width="1" height="1" fill="#000"/><rect x="5" y="3" width="7" height="1" fill="#fff"/><rect x="12" y="3" width="3" height="1" fill="#000"/><rect x="4" y="4" width="1" height="1" fill="#000"/><rect x="5" y="4" width="1" height="1" fill="#fff"/><rect x="6" y="4" width="4" height="1" fill="#000"/><rect x="10" y="4" width="2" height="1" fill="#fff"/><rect x="12" y="4" width="4" height="1" fill="#000"/><rect x="3" y="5" width="1" height="1" fill="#000"/><rect x="4" y="5" width="7" height="1" fill="#fff"/><rect x="11" y="5" width="2" height="1" fill="#000"/><rect x="13" y="5" width="1" height="1" fill="#808080"/><rect x="14" y="5" width="3" height="1" fill="#000"/><rect x="2" y="6" width="10" height="1" fill="#000"/><rect x="12" y="6" width="1" height="1" fill="#808080"/><rect x="13" y="6" width="1" height="1" fill="#000"/><rect x="14" y="6" width="1" height="1" fill="#808080"/><rect x="15" y="6" width="2" height="1" fill="#000"/><rect x="1" y="7" width="2" height="1" fill="#000"/><rect x="3" y="7" width="8" height="1" fill="#808080"/><rect x="11" y="7" width="2" height="1" fill="#000"/><rect x="13" y="7" width="1" height="1" fill="#808080"/><rect x="14" y="7" width="3" height="1" fill="#000"/><rect x="0" y="8" width="14" height="1" fill="#000"/><rect x="14" y="8" width="1" height="1" fill="#808080"/><rect x="15" y="8" width="2" height="1" fill="#000"/><rect x="0" y="9" width="1" height="1" fill="#000"/><rect x="1" y="9" width="12" height="1" fill="#808080"/><rect x="13" y="9" width="4" height="1" fill="#000"/><rect x="0" y="10" width="1" height="1" fill="#000"/><rect x="1" y="10" width="7" height="1" fill="#808080"/><rect x="8" y="10" width="3" height="1" fill="#fff"/><rect x="11" y="10" width="2" height="1" fill="#808080"/><rect x="13" y="10" width="3" height="1" fill="#000"/><rect x="0" y="11" width="1" height="1" fill="#000"/><rect x="1" y="11" width="7" height="1" fill="#808080"/><rect x="8" y="11" width="3" height="1" fill="#000"/><rect x="11" y="11" width="2" height="1" fill="#808080"/><rect x="13" y="11" width="3" height="1" fill="#000"/><rect x="0" y="12" width="15" height="1" fill="#000"/><rect x="1" y="13" width="2" height="1" fill="#000"/><rect x="3" y="13" width="8" height="1" fill="#808080"/><rect x="11" y="13" width="3" height="1" fill="#000"/><rect x="2" y="14" width="11" height="1" fill="#000"/></svg>
<svg style="left:880px;top:550px" width="16" height="15" viewBox="0 0 16 15" shape-rendering="crispEdges"><rect x="0" y="0" width="16" height="1" fill="#000"/><rect x="0" y="1" width="1" height="1" fill="#000"/><rect x="1" y="1" width="9" height="1" fill="#fff"/><rect x="10" y="1" width="1" height="1" fill="#d6d6d6"/><rect x="11" y="1" width="2" height="1" fill="#000"/><rect x="13" y="1" width="1" height="1" fill="#fff"/><rect x="14" y="1" width="2" height="1" fill="#000"/><rect x="0" y="2" width="1" height="1" fill="#000"/><rect x="1" y="2" width="1" height="1" fill="#fff"/><rect x="2" y="2" width="9" height="1" fill="#d6d6d6"/><rect x="11" y="2" width="1" height="1" fill="#000"/><rect x="12" y="2" width="1" height="1" fill="#fff"/><rect x="13" y="2" width="1" height="1" fill="#000"/><rect x="14" y="2" width="1" height="1" fill="#fff"/><rect x="15" y="2" width="1" height="1" fill="#000"/><rect x="0" y="3" width="1" height="1" fill="#000"/><rect x="1" y="3" width="1" height="1" fill="#fff"/><rect x="2" y="3" width="9" height="1" fill="#d6d6d6"/><rect x="11" y="3" width="5" height="1" fill="#000"/><rect x="0" y="4" width="1" height="1" fill="#000"/><rect x="1" y="4" width="1" height="1" fill="#fff"/><rect x="2" y="4" width="6" height="1" fill="#d6d6d6"/><rect x="8" y="4" width="1" height="1" fill="#000"/><rect x="9" y="4" width="2" height="1" fill="#d6d6d6"/><rect x="11" y="4" width="1" height="1" fill="#000"/><rect x="12" y="4" width="3" height="1" fill="#fff"/><rect x="15" y="4" width="1" height="1" fill="#000"/><rect x="0" y="5" width="1" height="1" fill="#000"/><rect x="1" y="5" width="1" height="1" fill="#fff"/><rect x="2" y="5" width="6" height="1" fill="#d6d6d6"/><rect x="8" y="5" width="1" height="1" fill="#000"/><rect x="9" y="5" width="2" height="1" fill="#d6d6d6"/><rect x="11" y="5" width="5" height="1" fill="#000"/><rect x="0" y="6" width="1" height="1" fill="#000"/><rect x="1" y="6" width="1" height="1" fill="#fff"/><rect x="2" y="6" width="6" height="1" fill="#d6d6d6"/><rect x="8" y="6" width="1" height="1" fill="#000"/><rect x="9" y="6" width="2" height="1" fill="#d6d6d6"/><rect x="11" y="6" width="1" height="1" fill="#000"/><rect x="12" y="6" width="1" height="1" fill="#fff"/><rect x="13" y="6" width="1" height="1" fill="#dcdcdc"/><rect x="14" y="6" width="1" height="1" fill="#fff"/><rect x="15" y="6" width="1" height="1" fill="#000"/><rect x="0" y="7" width="1" height="1" fill="#000"/><rect x="1" y="7" width="1" height="1" fill="#fff"/><rect x="2" y="7" width="1" height="1" fill="#d6d6d6"/><rect x="3" y="7" width="3" height="1" fill="#000"/><rect x="6" y="7" width="2" height="1" fill="#d6d6d6"/><rect x="8" y="7" width="1" height="1" fill="#000"/><rect x="9" y="7" width="2" height="1" fill="#d6d6d6"/><rect x="11" y="7" width="1" height="1" fill="#000"/><rect x="12" y="7" width="1" height="1" fill="#dcdcdc"/><rect x="13" y="7" width="1" height="1" fill="#fff"/><rect x="14" y="7" width="1" height="1" fill="#dcdcdc"/><rect x="15" y="7" width="1" height="1" fill="#000"/><rect x="0" y="8" width="1" height="1" fill="#000"/><rect x="1" y="8" width="1" height="1" fill="#fff"/><rect x="2" y="8" width="1" height="1" fill="#000"/><rect x="3" y="8" width="2" height="1" fill="#d6d6d6"/><rect x="5" y="8" width="2" height="1" fill="#000"/><rect x="7" y="8" width="1" height="1" fill="#d6d6d6"/><rect x="8" y="8" width="1" height="1" fill="#000"/><rect x="9" y="8" width="2" height="1" fill="#d6d6d6"/><rect x="11" y="8" width="5" height="1" fill="#000"/><rect x="0" y="9" width="1" height="1" fill="#000"/><rect x="1" y="9" width="1" height="1" fill="#fff"/><rect x="2" y="9" width="1" height="1" fill="#d6d6d6"/><rect x="3" y="9" width="4" height="1" fill="#000"/><rect x="7" y="9" width="1" height="1" fill="#d6d6d6"/><rect x="8" y="9" width="1" height="1" fill="#000"/><rect x="9" y="9" width="2" height="1" fill="#d6d6d6"/><rect x="11" y="9" width="1" height="1" fill="#000"/><rect x="12" y="9" width="3" height="1" fill="#fff"/><rect x="15" y="9" width="1" height="1" fill="#000"/><rect x="0" y="10" width="1" height="1" fill="#000"/><rect x="1" y="10" width="1" height="1" fill="#fff"/><rect x="2" y="10" width="2" height="1" fill="#000"/><rect x="4" y="10" width="1" height="1" fill="#d6d6d6"/><rect x="5" y="10" width="2" height="1" fill="#000"/><rect x="7" y="10" width="1" height="1" fill="#d6d6d6"/><rect x="8" y="10" width="1" height="1" fill="#000"/><rect x="9" y="10" width="2" height="1" fill="#d6d6d6"/><rect x="11" y="10" width="5" height="1" fill="#000"/><rect x="0" y="11" width="1" height="1" fill="#000"/><rect x="1" y="11" width="1" height="1" fill="#fff"/><rect x="2" y="11" width="2" height="1" fill="#000"/><rect x="4" y="11" width="1" height="1" fill="#d6d6d6"/><rect x="5" y="11" width="2" height="1" fill="#000"/><rect x="7" y="11" width="1" height="1" fill="#d6d6d6"/><rect x="8" y="11" width="1" height="1" fill="#000"/><rect x="9" y="11" width="2" height="1" fill="#d6d6d6"/><rect x="11" y="11" width="1" height="1" fill="#000"/><rect x="12" y="11" width="1" height="1" fill="#fff"/><rect x="13" y="11" width="1" height="1" fill="#000"/><rect x="14" y="11" width="1" height="1" fill="#fff"/><rect x="15" y="11" width="1" height="1" fill="#000"/><rect x="0" y="12" width="1" height="1" fill="#000"/><rect x="1" y="12" width="1" height="1" fill="#fff"/><rect x="2" y="12" width="1" height="1" fill="#d6d6d6"/><rect x="3" y="12" width="4" height="1" fill="#000"/><rect x="7" y="12" width="1" height="1" fill="#d6d6d6"/><rect x="8" y="12" width="1" height="1" fill="#000"/><rect x="9" y="12" width="2" height="1" fill="#d6d6d6"/><rect x="11" y="12" width="2" height="1" fill="#000"/><rect x="13" y="12" width="1" height="1" fill="#fff"/><rect x="14" y="12" width="2" height="1" fill="#000"/><rect x="0" y="13" width="1" height="1" fill="#000"/><rect x="1" y="13" width="1" height="1" fill="#fff"/><rect x="2" y="13" width="9" height="1" fill="#d6d6d6"/><rect x="11" y="13" width="5" height="1" fill="#000"/><rect x="0" y="14" width="16" height="1" fill="#000"/></svg>
<svg style="left:885px;top:615px" width="16" height="15" viewBox="0 0 16 15" shape-rendering="crispEdges"><rect x="1" y="0" width="8" height="1" fill="#000"/><rect x="10" y="0" width="6" height="1" fill="#cbcbcb"/><rect x="1" y="1" width="1" height="1" fill="#000"/><rect x="2" y="1" width="1" height="1" fill="#9a9a28"/><rect x="3" y="1" width="1" height="1" fill="#000"/><rect x="4" y="1" width="4" height="1" fill="#fff"/><rect x="8" y="1" width="1" height="1" fill="#000"/><rect x="10" y="1" width="6" height="1" fill="#cbcbcb"/><rect x="1" y="2" width="1" height="1" fill="#000"/><rect x="2" y="2" width="2" height="1" fill="#9a9a28"/><rect x="4" y="2" width="1" height="1" fill="#000"/><rect x="5" y="2" width="3" height="1" fill="#fff"/><rect x="8" y="2" width="1" height="1" fill="#000"/><rect x="10" y="2" width="3" height="1" fill="#cbcbcb"/><rect x="13" y="2" width="1" height="1" fill="#0000d8"/><rect x="14" y="2" width="2" height="1" fill="#cbcbcb"/><rect x="1" y="3" width="1" height="1" fill="#000"/><rect x="2" y="3" width="3" height="1" fill="#9a9a28"/><rect x="5" y="3" width="1" height="1" fill="#000"/><rect x="6" y="3" width="2" height="1" fill="#fff"/><rect x="8" y="3" width="1" height="1" fill="#000"/><rect x="10" y="3" width="2" height="1" fill="#cbcbcb"/><rect x="12" y="3" width="2" height="1" fill="#0000d8"/><rect x="14" y="3" width="2" height="1" fill="#cbcbcb"/><rect x="1" y="4" width="1" height="1" fill="#000"/><rect x="2" y="4" width="3" height="1" fill="#9a9a28"/><rect x="5" y="4" width="1" height="1" fill="#000"/><rect x="6" y="4" width="2" height="1" fill="#fff"/><rect x="8" y="4" width="1" height="1" fill="#000"/><rect x="10" y="4" width="1" height="1" fill="#cbcbcb"/><rect x="11" y="4" width="5" height="1" fill="#0000d8"/><rect x="1" y="5" width="1" height="1" fill="#000"/><rect x="2" y="5" width="3" height="1" fill="#9a9a28"/><rect x="5" y="5" width="1" height="1" fill="#000"/><rect x="6" y="5" width="2" height="1" fill="#fff"/><rect x="8" y="5" width="1" height="1" fill="#000"/><rect x="9" y="5" width="1" height="1" fill="#cbcbcb"/><rect x="10" y="5" width="6" height="1" fill="#0000d8"/><rect x="1" y="6" width="1" height="1" fill="#000"/><rect x="2" y="6" width="2" height="1" fill="#9a9a28"/><rect x="4" y="6" width="2" height="1" fill="#000"/><rect x="6" y="6" width="2" height="1" fill="#fff"/><rect x="8" y="6" width="1" height="1" fill="#000"/><rect x="10" y="6" width="1" height="1" fill="#cbcbcb"/><rect x="11" y="6" width="5" height="1" fill="#0000d8"/><rect x="1" y="7" width="1" height="1" fill="#000"/><rect x="2" y="7" width="3" height="1" fill="#9a9a28"/><rect x="5" y="7" width="1" height="1" fill="#000"/><rect x="6" y="7" width="2" height="1" fill="#fff"/><rect x="8" y="7" width="1" height="1" fill="#000"/><rect x="10" y="7" width="2" height="1" fill="#cbcbcb"/><rect x="12" y="7" width="2" height="1" fill="#0000d8"/><rect x="14" y="7" width="2" height="1" fill="#cbcbcb"/><rect x="1" y="8" width="1" height="1" fill="#000"/><rect x="2" y="8" width="3" height="1" fill="#9a9a28"/><rect x="5" y="8" width="1" height="1" fill="#000"/><rect x="6" y="8" width="2" height="1" fill="#fff"/><rect x="8" y="8" width="1" height="1" fill="#000"/><rect x="10" y="8" width="3" height="1" fill="#cbcbcb"/><rect x="13" y="8" width="1" height="1" fill="#0000d8"/><rect x="14" y="8" width="2" height="1" fill="#cbcbcb"/><rect x="1" y="9" width="1" height="1" fill="#000"/><rect x="2" y="9" width="3" height="1" fill="#9a9a28"/><rect x="5" y="9" width="1" height="1" fill="#000"/><rect x="6" y="9" width="2" height="1" fill="#fff"/><rect x="8" y="9" width="1" height="1" fill="#000"/><rect x="10" y="9" width="6" height="1" fill="#cbcbcb"/><rect x="0" y="10" width="2" height="1" fill="#000"/><rect x="2" y="10" width="3" height="1" fill="#9a9a28"/><rect x="5" y="10" width="8" height="1" fill="#000"/><rect x="13" y="10" width="3" height="1" fill="#cbcbcb"/><rect x="2" y="11" width="1" height="1" fill="#000"/><rect x="3" y="11" width="2" height="1" fill="#9a9a28"/><rect x="5" y="11" width="2" height="1" fill="#000"/><rect x="10" y="11" width="6" height="1" fill="#cbcbcb"/><rect x="3" y="12" width="1" height="1" fill="#000"/><rect x="4" y="12" width="1" height="1" fill="#9a9a28"/><rect x="5" y="12" width="2" height="1" fill="#000"/><rect x="10" y="12" width="6" height="1" fill="#cbcbcb"/><rect x="4" y="13" width="3" height="1" fill="#000"/><rect x="5" y="14" width="2" height="1" fill="#000"/></svg>
<svg style="left:932px;top:77px" width="13" height="13" viewBox="0 0 13 13"><path d="M1.5 1.5 L11.5 11.5 M11.5 1.5 L1.5 11.5" stroke="#800000" stroke-width="2.1" fill="none"/></svg>

<div class="t" style="left:32.2px;top:13px;font-size:12px;line-height:12px;letter-spacing:0.401px;color:#000;text-shadow:0 0 6px rgba(255,255,255,.9),0 0 3px rgba(255,255,255,.8)">Журнал</div>
<div class="t" style="left:80.2px;top:13px;font-size:12px;line-height:12px;letter-spacing:-0.039px;color:#000;text-shadow:0 0 6px rgba(255,255,255,.9),0 0 3px rgba(255,255,255,.8)">Контрагентов</div>
<div class="t" style="left:158.5px;top:13px;font-size:12px;line-height:12px;letter-spacing:0.9px;color:#000;text-shadow:0 0 6px rgba(255,255,255,.9),0 0 3px rgba(255,255,255,.8)">-</div>
<div class="t" style="left:165.6px;top:13px;font-size:12px;line-height:12px;letter-spacing:-0.219px;color:#000;text-shadow:0 0 6px rgba(255,255,255,.9),0 0 3px rgba(255,255,255,.8)">доступ</div>
<div class="t" style="left:206.0px;top:13px;font-size:12px;line-height:12px;letter-spacing:1.45px;color:#000;text-shadow:0 0 6px rgba(255,255,255,.9),0 0 3px rgba(255,255,255,.8)">к</div>
<div class="t" style="left:214.6px;top:13px;font-size:12px;line-height:12px;letter-spacing:0.063px;color:#000;text-shadow:0 0 6px rgba(255,255,255,.9),0 0 3px rgba(255,255,255,.8)">документам</div>
<div class="t" style="left:284.9px;top:13px;font-size:12px;line-height:12px;letter-spacing:0.034px;color:#000;text-shadow:0 0 6px rgba(255,255,255,.9),0 0 3px rgba(255,255,255,.8)">только</div>
<div class="t" style="left:325.2px;top:13px;font-size:12px;line-height:12px;letter-spacing:-0.083px;color:#000;text-shadow:0 0 6px rgba(255,255,255,.9),0 0 3px rgba(255,255,255,.8)">через</div>
<div class="t" style="left:359.6px;top:13px;font-size:12px;line-height:12px;letter-spacing:0.148px;color:#000;text-shadow:0 0 6px rgba(255,255,255,.9),0 0 3px rgba(255,255,255,.8)">карточку</div>
<div class="t" style="left:413.2px;top:13px;font-size:12px;line-height:12px;letter-spacing:-0.121px;color:#000;text-shadow:0 0 6px rgba(255,255,255,.9),0 0 3px rgba(255,255,255,.8)">(DblClk</div>
<div class="t" style="left:455.6px;top:13px;font-size:12px;line-height:12px;letter-spacing:-1.006px;color:#000;text-shadow:0 0 6px rgba(255,255,255,.9),0 0 3px rgba(255,255,255,.8)">на</div>
<div class="t" style="left:470.0px;top:13px;font-size:12px;line-height:12px;letter-spacing:-0.138px;color:#000;text-shadow:0 0 6px rgba(255,255,255,.9),0 0 3px rgba(255,255,255,.8)">краткое</div>
<div class="t" style="left:515.5px;top:13px;font-size:12px;line-height:12px;letter-spacing:0.012px;color:#000;text-shadow:0 0 6px rgba(255,255,255,.9),0 0 3px rgba(255,255,255,.8)">наименование</div>
<div class="t" style="left:600.2px;top:13px;font-size:12px;line-height:12px;letter-spacing:0.4px;color:#000;text-shadow:0 0 6px rgba(255,255,255,.9),0 0 3px rgba(255,255,255,.8)">КА</div>
<div class="t" style="left:619.1px;top:13px;font-size:12px;line-height:12px;letter-spacing:-0.075px;color:#000;text-shadow:0 0 6px rgba(255,255,255,.9),0 0 3px rgba(255,255,255,.8)">в</div>
<div class="t" style="left:627.9px;top:13px;font-size:12px;line-height:12px;letter-spacing:0.221px;color:#000;text-shadow:0 0 6px rgba(255,255,255,.9),0 0 3px rgba(255,255,255,.8)">режиме</div>
<div class="t" style="left:675.9px;top:13px;font-size:12px;line-height:12px;letter-spacing:-0.292px;color:#000;text-shadow:0 0 6px rgba(255,255,255,.9),0 0 3px rgba(255,255,255,.8)">Редактировать)</div>
<div class="t" style="left:70.7px;top:35px;font-size:12px;line-height:12px;letter-spacing:0.112px;color:#000;">- в черном списке</div>
<div class="t" style="left:238.8px;top:34px;font-size:12px;line-height:12px;letter-spacing:0.043px;color:#000;">- текущий контрагент (курсор)</div>
<div class="t" style="left:92.7px;top:58px;font-size:13px;line-height:13px;letter-spacing:-0.14px;color:#000;">Краткое наименование контрагента</div>
<div class="t" style="left:417.8px;top:58px;font-size:13px;line-height:13px;letter-spacing:-0.375px;color:#000;">ИНН</div>
<div class="t" style="left:559.4px;top:58px;font-size:13px;line-height:13px;letter-spacing:-0.138px;color:#000;">Статус контрагента</div>
<div class="t" style="left:38.7px;top:81px;font-size:12px;line-height:12px;letter-spacing:-0.073px;color:#000;">ЗАО &quot;Анкона&quot;</div>
<div class="t" style="left:364.0px;top:83px;font-size:13px;line-height:13px;letter-spacing:-0.211px;color:#000;">6456795333</div>
<div class="t" style="left:502.7px;top:84px;font-size:11px;line-height:11px;letter-spacing:-0.061px;color:#000;">Юридическое лицо</div>
<div class="t" style="left:38.7px;top:107px;font-size:12px;line-height:12px;letter-spacing:-0.037px;color:#000;">ИП Иванов М.И.</div>
<div class="t" style="left:364.0px;top:109px;font-size:13px;line-height:13px;letter-spacing:-0.214px;color:#000;">578686979797</div>
<div class="t" style="left:502.7px;top:110px;font-size:11px;line-height:11px;letter-spacing:0.095px;color:#000;">Индивидуальный предприниматель</div>
<div class="t" style="left:38.7px;top:133px;font-size:12px;line-height:12px;letter-spacing:-0.478px;color:#000;">ОАО &quot;МММ&quot;</div>
<div class="t" style="left:364.0px;top:135px;font-size:13px;line-height:13px;letter-spacing:-0.211px;color:#000;">4253235326</div>
<div class="t" style="left:502.7px;top:136px;font-size:11px;line-height:11px;letter-spacing:-0.061px;color:#000;">Юридическое лицо</div>
<div class="t" style="left:38.7px;top:159px;font-size:12px;line-height:12px;letter-spacing:0.035px;color:#000;">ООО &quot;Красная Москва&quot;</div>
<div class="t" style="left:364.0px;top:161px;font-size:13px;line-height:13px;letter-spacing:-0.211px;color:#000;">7543908765</div>
<div class="t" style="left:502.7px;top:162px;font-size:11px;line-height:11px;letter-spacing:-0.061px;color:#000;">Юридическое лицо</div>
<div class="t" style="left:38.7px;top:185px;font-size:12px;line-height:12px;letter-spacing:0.058px;color:#000;">Сидоров Ф.Т.</div>
<div class="t" style="left:364.0px;top:187px;font-size:13px;line-height:13px;letter-spacing:-0.214px;color:#000;">535427678695</div>
<div class="t" style="left:502.7px;top:188px;font-size:11px;line-height:11px;letter-spacing:-0.009px;color:#000;">Физическое лицо</div>
<div class="t" style="left:821.7px;top:46px;font-size:12px;line-height:12px;letter-spacing:-0.173px;color:#1515d2;font-weight:bold;">Работа с Контрагентом</div>
<div class="t" style="left:806.3px;top:95px;font-size:12px;line-height:12px;letter-spacing:-0.166px;color:#000;font-weight:bold;">Добавить</div>
<div class="t" style="left:912.4px;top:95px;font-size:12px;line-height:12px;letter-spacing:-0.152px;color:#000;font-weight:bold;">Удалить</div>
<div class="t" style="left:822.7px;top:143px;font-size:12px;line-height:12px;letter-spacing:-0.126px;color:#000;font-weight:bold;">Карточка контрагента</div>
<div class="t" style="left:831.8px;top:185px;font-size:12px;line-height:12px;letter-spacing:-0.254px;color:#000;font-weight:bold;">Изменить карточку</div>
<div class="t" style="left:861.4px;top:227px;font-size:12px;line-height:12px;letter-spacing:-0.237px;color:#1515d2;font-weight:bold;">История</div>
<div class="t" style="left:811.0px;top:269px;font-size:12px;line-height:12px;letter-spacing:-0.11px;color:#000;font-weight:bold;">Договоры контрагента (2)</div>
<div class="t" style="left:835.0px;top:299px;font-size:12px;line-height:12px;letter-spacing:-0.237px;color:#e01010;font-weight:bold;">В Черный Список</div>
<div class="t" style="left:830.5px;top:345px;font-size:12px;line-height:12px;letter-spacing:-0.052px;color:#1515d2;font-weight:bold;">Работа с Журналом</div>
<div class="t" style="left:844.7px;top:372px;font-size:11px;line-height:11px;letter-spacing:0.11px;color:#1515d2;font-weight:bold;">Редактировать</div>
<div class="t" style="left:798.8px;top:427px;font-size:11px;line-height:11px;letter-spacing:0.102px;color:#000;font-weight:bold;">Печать Журнала</div>
<div class="t" style="left:929.9px;top:417px;font-size:11px;line-height:11px;letter-spacing:0.144px;color:#000;">Просмотр</div>
<div class="t" style="left:929.9px;top:434px;font-size:11px;line-height:11px;letter-spacing:-0.226px;color:#000;">B MS Word</div>
<div class="t" style="left:871.0px;top:462px;font-size:12px;line-height:12px;letter-spacing:0.137px;color:#1515d2;font-weight:bold;">Поиск</div>
<div class="t" style="left:807.4px;top:504px;font-size:12px;line-height:12px;letter-spacing:-0.052px;color:#000;font-weight:bold;">Все записи</div>
<div class="t" style="left:900.2px;top:479px;font-size:12px;line-height:12px;letter-spacing:-0.342px;color:#000;font-weight:bold;">Статус</div>
<div class="t" style="left:833.8px;top:569px;font-size:12px;line-height:12px;letter-spacing:-0.162px;color:#000;font-weight:bold;">Журнал контактов</div>
<div class="t" style="left:871.9px;top:637px;font-size:12px;line-height:12px;letter-spacing:0.064px;color:#1515d2;font-weight:bold;">Выход</div>
</body>
</html>
